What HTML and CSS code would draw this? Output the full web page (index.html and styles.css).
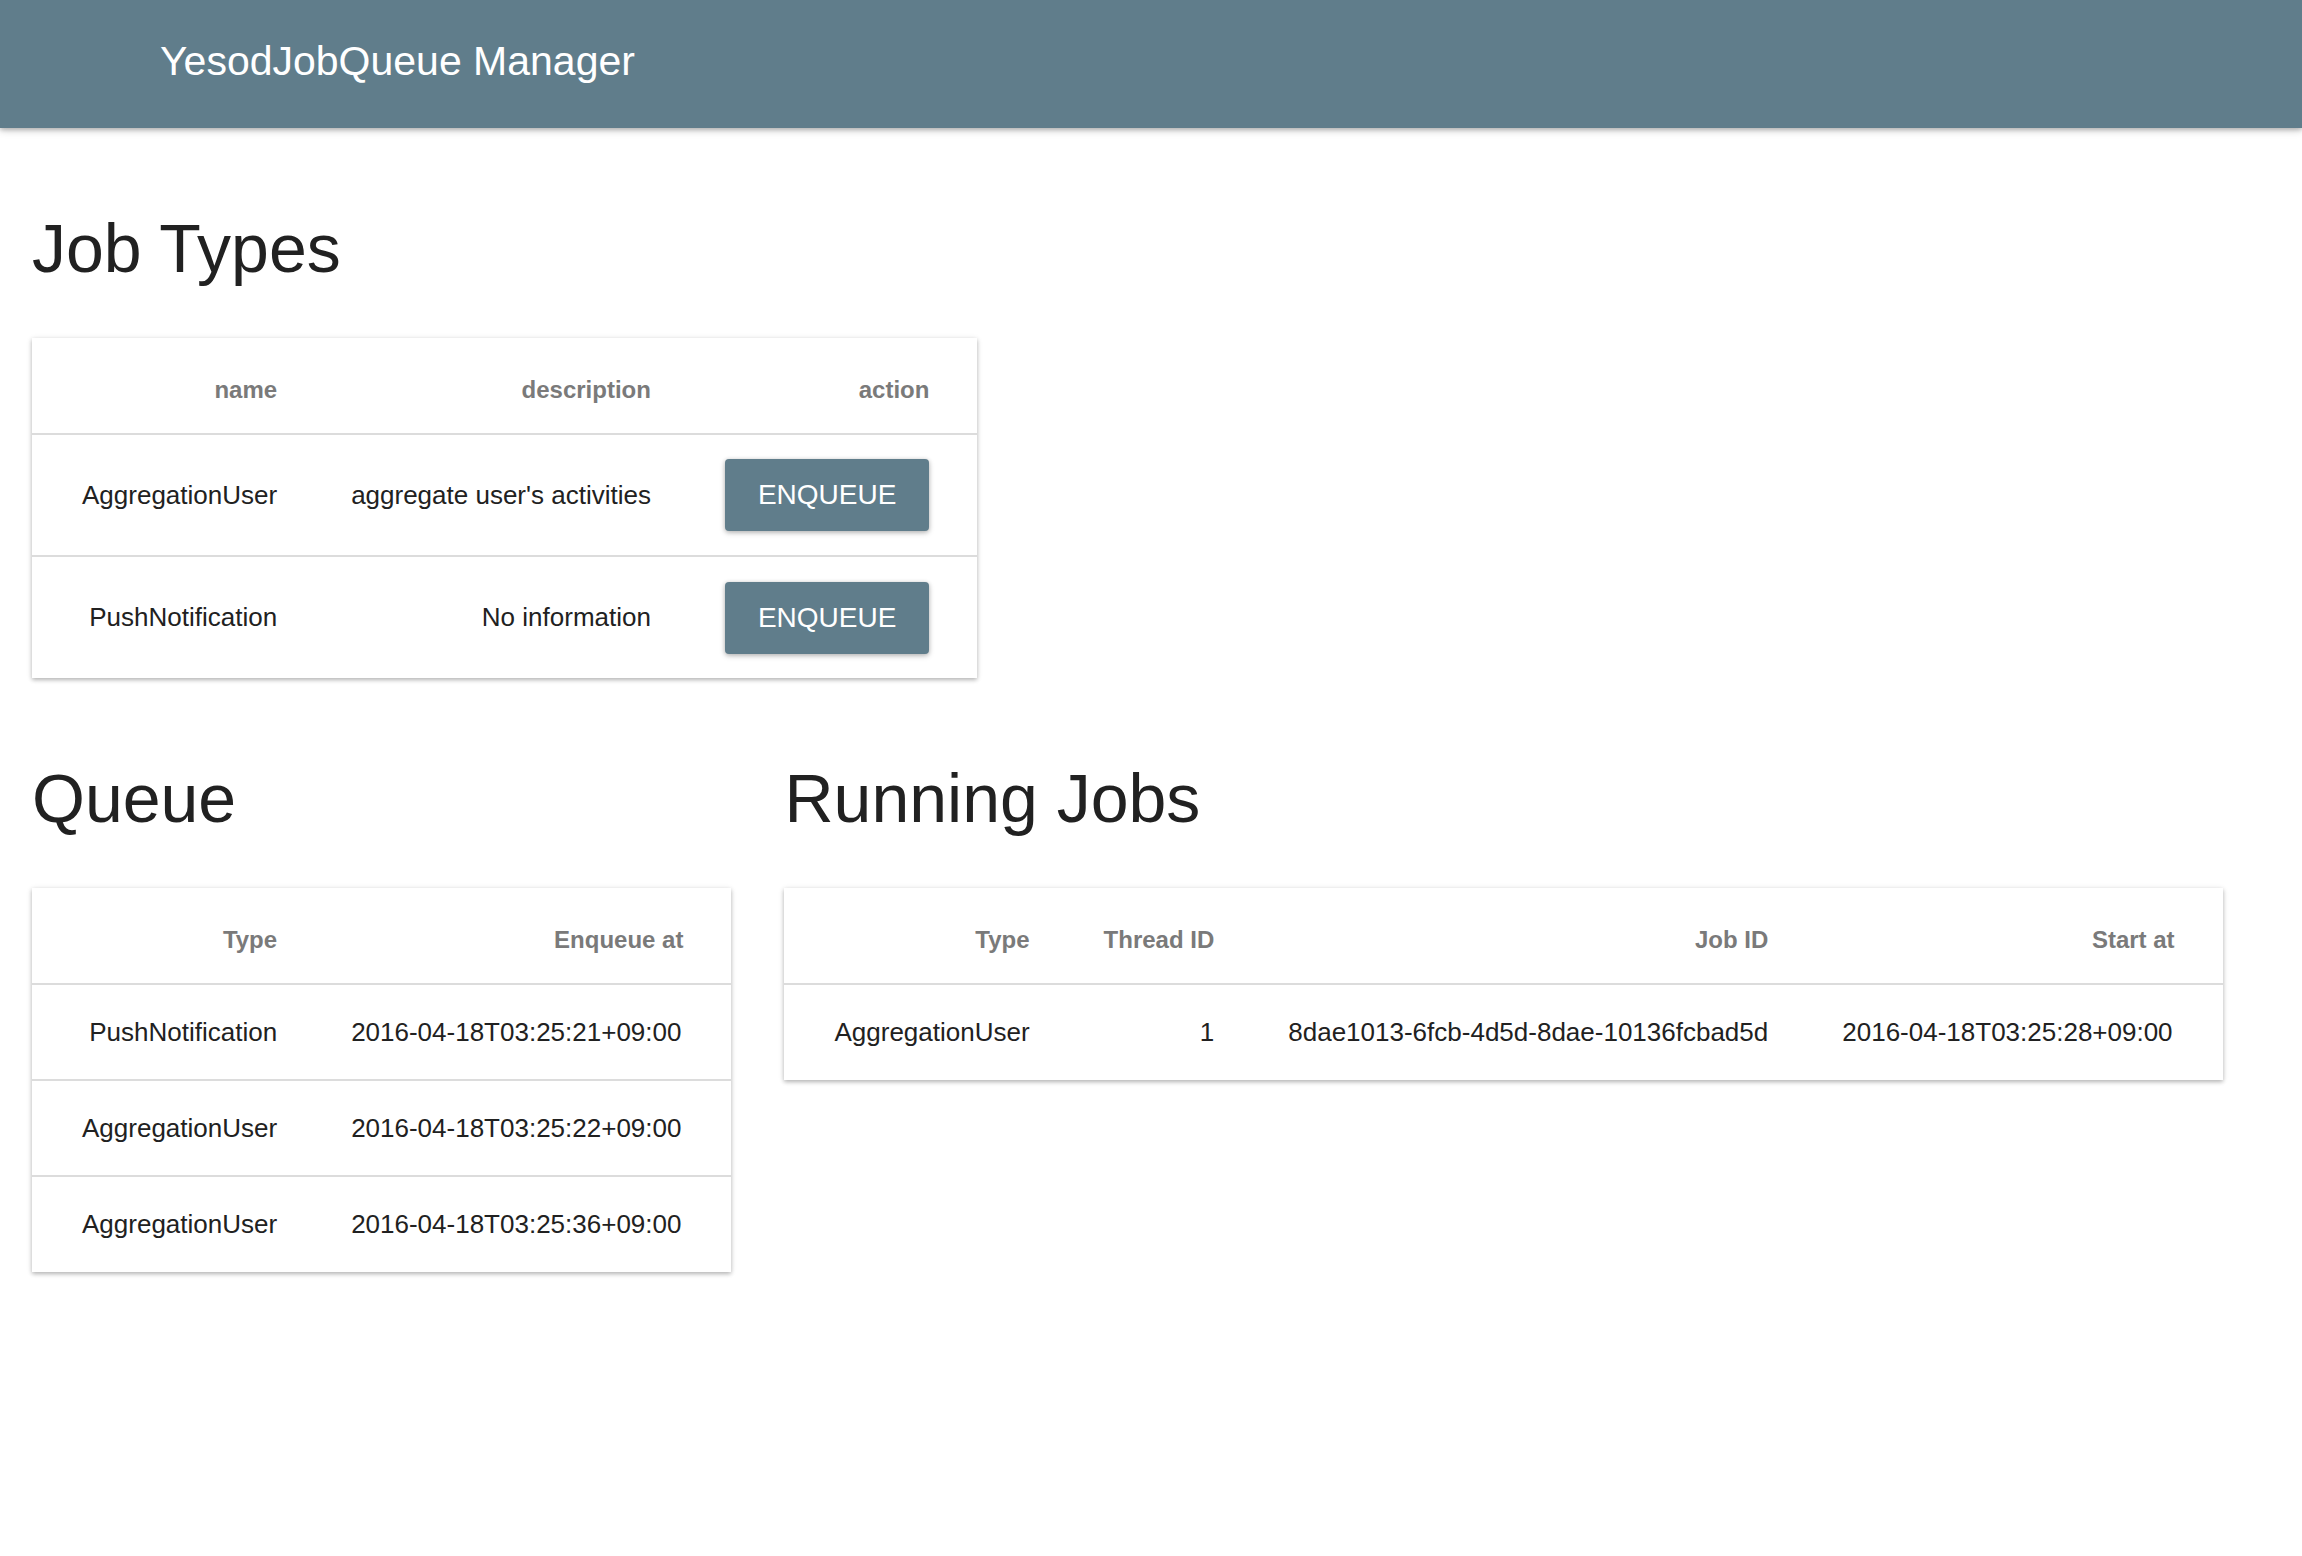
FILE: index.html
```html
<!DOCTYPE html>
<html>
<head>
<meta charset="utf-8">
<title>YesodJobQueue Manager</title>
<link rel="stylesheet" href="styles.css">
</head>
<body>
<header class="appbar">
  <div class="appbar-title">YesodJobQueue Manager</div>
</header>
<main class="content">
  <section class="section">
    <h1 class="section-title">Job Types</h1>
    <table class="paper-table">
      <thead>
        <tr><th>name</th><th>description</th><th>action</th></tr>
      </thead>
      <tbody>
        <tr class="tall"><td>AggregationUser</td><td>aggregate user's activities</td><td class="action-cell"><button class="btn">ENQUEUE</button></td></tr>
        <tr class="tall"><td>PushNotification</td><td>No information</td><td class="action-cell"><button class="btn">ENQUEUE</button></td></tr>
      </tbody>
    </table>
  </section>
  <div class="row">
    <section class="section">
      <h1 class="section-title">Queue</h1>
      <table class="paper-table">
        <thead>
          <tr><th>Type</th><th>Enqueue at</th></tr>
        </thead>
        <tbody>
          <tr><td>PushNotification</td><td>2016-04-18T03:25:21+09:00</td></tr>
          <tr><td>AggregationUser</td><td>2016-04-18T03:25:22+09:00</td></tr>
          <tr><td>AggregationUser</td><td>2016-04-18T03:25:36+09:00</td></tr>
        </tbody>
      </table>
    </section>
    <section class="section">
      <h1 class="section-title">Running Jobs</h1>
      <table class="paper-table">
        <thead>
          <tr><th>Type</th><th>Thread ID</th><th>Job ID</th><th>Start at</th></tr>
        </thead>
        <tbody>
          <tr><td>AggregationUser</td><td>1</td><td>8dae1013-6fcb-4d5d-8dae-10136fcbad5d</td><td>2016-04-18T03:25:28+09:00</td></tr>
        </tbody>
      </table>
    </section>
  </div>
</main>
</body>
</html>
```
FILE: styles.css
```css
html, body {
  margin: 0;
  padding: 0;
  background: #ffffff;
  font-family: "Liberation Sans", Arial, Helvetica, sans-serif;
  color: #212121;
}

.appbar {
  height: 128px;
  background: #607d8b;
  box-shadow: 0 2px 8px rgba(0, 0, 0, 0.22), 0 2px 4px rgba(0, 0, 0, 0.16);
  display: flex;
  align-items: flex-start;
  padding-left: 160px;
  box-sizing: border-box;
}

.appbar-title {
  color: #ffffff;
  font-size: 41px;
  line-height: 122px;
  font-weight: 400;
}

.content {
  padding: 0 32px 80px 32px;
}

.row {
  display: flex;
  align-items: flex-start;
  gap: 53px;
}

.section-title {
  font-size: 68px;
  line-height: 80px;
  font-weight: 400;
  color: #212121;
  margin: 80px 0 50px 0;
}

.paper-table {
  border-collapse: collapse;
  background: #ffffff;
  box-shadow: 0 2px 4px rgba(0, 0, 0, 0.22), 0 1px 6px rgba(0, 0, 0, 0.12);
}

.paper-table th {
  height: 96px;
  box-sizing: border-box;
  padding: 8px 50px 0 24px;
  text-align: right;
  font-size: 24px;
  font-weight: 700;
  color: #7a7a7a;
  border-bottom: 2px solid #dcdcdc;
  white-space: nowrap;
  vertical-align: middle;
}

.paper-table td {
  height: 96px;
  box-sizing: border-box;
  padding: 0 50px 0 24px;
  text-align: right;
  font-size: 26px;
  color: #212121;
  white-space: nowrap;
  vertical-align: middle;
  border-bottom: 2px solid #dcdcdc;
}

.paper-table th:first-child,
.paper-table td:first-child {
  padding-left: 50px;
}

.paper-table tbody tr:last-child td {
  border-bottom: none;
}

.paper-table tr.tall td {
  height: 122px;
}

.paper-table td.action-cell,
.paper-table th:last-child {
  padding-right: 48px;
}

.btn {
  height: 72px;
  padding: 0 33px;
  border: none;
  border-radius: 4px;
  background: #607d8b;
  color: #ffffff;
  font-family: "Liberation Sans", Arial, Helvetica, sans-serif;
  font-size: 28px;
  font-weight: 400;
  box-shadow: 0 2px 6px rgba(0, 0, 0, 0.16), 0 1px 4px rgba(0, 0, 0, 0.2);
  cursor: pointer;
  vertical-align: middle;
}
```
